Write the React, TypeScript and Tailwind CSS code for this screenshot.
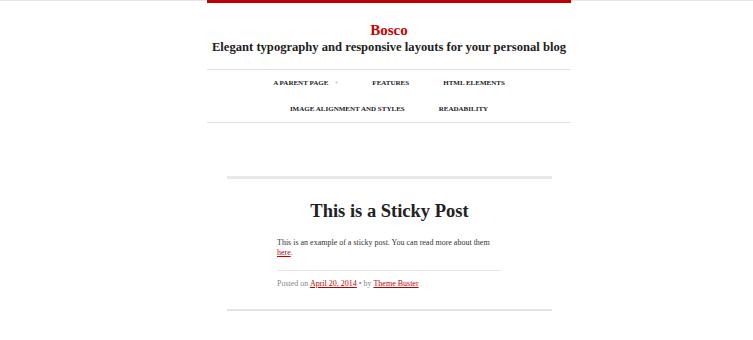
const serif = { fontFamily: '"Liberation Serif", "DejaVu Serif", serif' };

function NavItem({ label, caret }: { label: string; caret?: boolean }) {
  return (
    <a href="#" className="flex items-center px-[17px] text-[7px] font-bold text-[#222] uppercase">
      {label}
      {caret && <span className="ml-[6px] text-[4px] text-[#bbb]">▼</span>}
    </a>
  );
}

export default function App() {
  return (
    <div className="min-h-[340px] w-[753px] overflow-hidden bg-white" style={serif}>
      <div className="h-px w-full bg-[#e6e6e6]" />
      <header className="-mt-px ml-[207px] w-[364px]">
        <div className="h-[3px] bg-[#c00000]" />
        <div className="pt-[18px] text-center">
          <h1 className="text-[15px] leading-[18px] font-bold text-[#d00000]">Bosco</h1>
          <p className="text-[12.6px] leading-[16px] font-bold whitespace-nowrap text-[#222]">
            Elegant typography and responsive layouts for your personal blog
          </p>
        </div>
        <nav className="mt-[14px] border-y border-[#e2e2e2]">
          <div className="flex h-[26px] items-center justify-center">
            <NavItem label="A Parent Page" caret />
            <NavItem label="Features" />
            <NavItem label="HTML Elements" />
          </div>
          <div className="flex h-[26px] items-center justify-center">
            <NavItem label="Image Alignment and Styles" />
            <NavItem label="Readability" />
          </div>
        </nav>
      </header>

      <main className="mt-[53px] ml-[227px] w-[325px]">
        <article className="border-t-[3px] border-b-2 border-t-[#e8e8e8] border-b-[#e4e4e4] pb-[20px]">
          <h2 className="pt-[19px] text-center text-[18.5px] leading-[26px] font-bold text-[#222]">
            This is a Sticky Post
          </h2>
          <div className="mx-[50px] mt-[14px] text-[8px] leading-[10px] text-[#333]">
            <p className="pb-[12px]">
              This is an example of a sticky post. You can read more about them
              <br />
              <a href="#" className="text-[#c00000] underline">here</a>.
            </p>
            <div className="border-t border-[#e8e8e8] pt-[8px] text-[#888]">
              Posted on{' '}
              <a href="#" className="text-[#c00000] underline">April 20, 2014</a> • by{' '}
              <a href="#" className="text-[#c00000] underline">Theme Buster</a>
            </div>
          </div>
        </article>
      </main>
    </div>
  );
}
